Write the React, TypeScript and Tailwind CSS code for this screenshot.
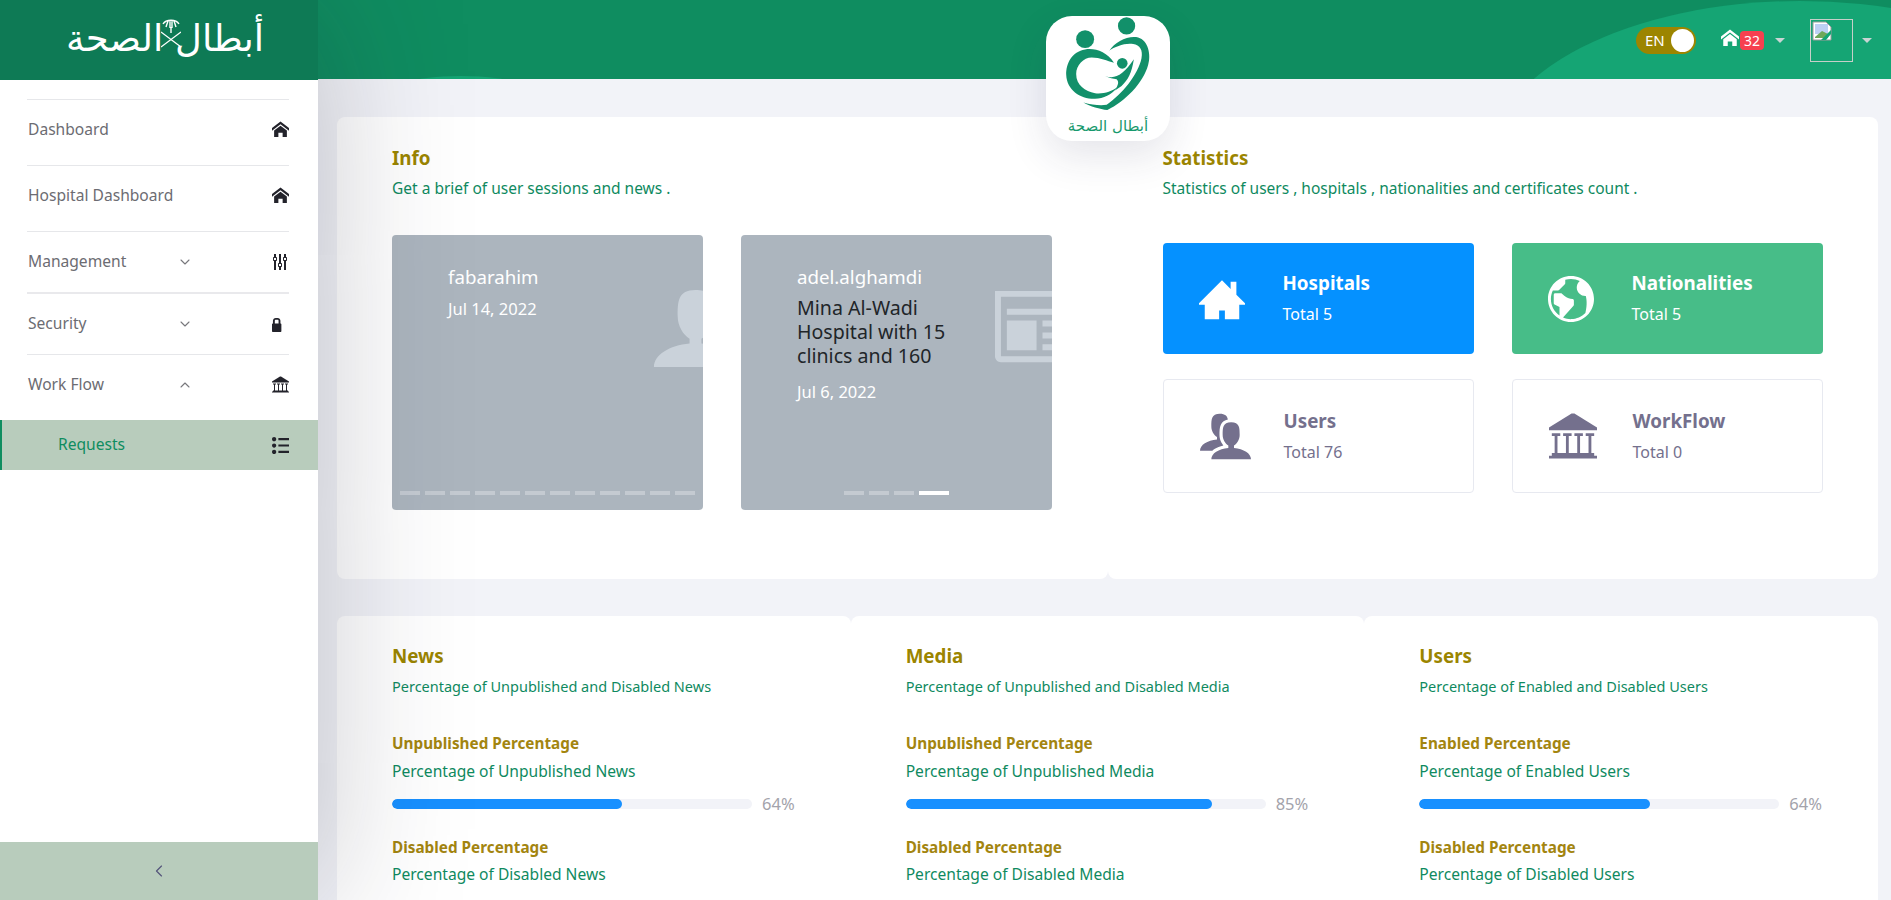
import React from "react";
import { ChevronDown, ChevronLeft, ChevronUp } from "lucide-react";
import {
  ImEarth,
  ImEqualizer2,
  ImHome,
  ImHome3,
  ImLibrary,
  ImList2,
  ImLock,
  ImNewspaper,
  ImUser,
  ImUsers,
  ImCancelCircle,
} from "react-icons/im";

const AR = { fontFamily: '"DejaVu Sans", sans-serif' };

function Caret() {
  return (
    <span className="w-0 h-0 border-l-[5px] border-r-[5px] border-t-[5px] border-l-transparent border-r-transparent border-t-[#c9d4d4]" />
  );
}

function BrandMark() {
  return (
    <svg viewBox="137 48 374 300" className="w-[124px] h-[100px] shrink-0" fill="#12906a">
      <circle cx="380" cy="77" r="26" />
      <circle cx="255" cy="117" r="27" />
      <circle cx="367" cy="190" r="16" />
      <path d="M342 188C320 155 285 143 255 148C215 155 197 190 198 225C200 270 240 298 285 297C310 296 335 285 352 262C335 275 310 283 285 280C255 275 228 255 228 222C228 195 250 172 275 172C300 172 322 182 342 188Z" />
      <path d="M328 152C345 125 385 105 415 112C445 120 455 165 445 195C430 250 375 305 322 331C300 328 270 320 250 308C275 315 300 318 320 315C365 285 415 225 425 175C430 150 420 135 400 132C375 128 345 140 328 152Z" />
      <path d="M315 228C345 240 370 225 402 178C395 220 385 240 365 258L345 272C355 255 358 245 350 238C340 236 328 234 315 228Z" />
    </svg>
  );
}

function Emblem() {
  return (
    <svg viewBox="0 0 20 44" className="absolute left-[161px] top-[17px] w-[20px] h-[44px]" stroke="#fff" fill="none" strokeWidth="1.4">
      <path d="M2 7C5 2 15 2 18 7M5 10L7 4M9 11V3M11 11V3M15 10L13 4M10 10V16" />
      <path d="M0 15L20 30M20 15L0 30" strokeWidth="1.2" />
    </svg>
  );
}

function MenuRow({
  label,
  icon,
  chevron,
  className,
}: {
  label: string;
  icon: React.ReactNode;
  chevron?: "up" | "down";
  className: string;
}) {
  return (
    <div className={`flex items-center ml-[27px] mr-[29px] pl-[1px] text-[15.6px] text-[#6c6c72] ${className}`}>
      <span className="flex-1">{label}</span>
      {chevron === "down" && <ChevronDown size={16} strokeWidth={1.6} className="mr-[79px] text-[#77777c]" />}
      {chevron === "up" && <ChevronUp size={16} strokeWidth={1.6} className="mr-[79px] text-[#77777c]" />}
      <span className="w-[17px] flex justify-start text-[#23232b]">{icon}</span>
    </div>
  );
}

function Sidebar() {
  return (
    <aside className="w-[318px] shrink-0 flex flex-col bg-white relative z-20 shadow-[0_0_150px_rgba(30,30,50,0.26)]">
      <div className="h-[80px] shrink-0 bg-[#0e7a55] relative flex items-center justify-center pl-[12px]">
        <span className="text-white text-[37px] leading-none pb-[4px]" style={AR}>
          أبطال الصحة
        </span>
        <Emblem />
      </div>
      <div className="flex-1 pt-[19px]">
        <MenuRow label="Dashboard" icon={<ImHome size={17} />} className="h-[66px] pb-[6px] border-t border-[#e6e7ea]" />
        <MenuRow label="Hospital Dashboard" icon={<ImHome size={17} />} className="h-[66px] pb-[6px] border-t border-[#e6e7ea]" />
        <MenuRow label="Management" chevron="down" icon={<ImEqualizer2 size={16} />} className="h-[61px] border-t border-[#e6e7ea]" />
        <MenuRow label="Security" chevron="down" icon={<ImLock size={15} />} className="h-[62px] border-t-2 border-[#e9e9ec]" />
        <MenuRow label="Work Flow" chevron="up" icon={<ImLibrary size={17} />} className="h-[66px] pb-[6px] border-t border-[#e6e7ea]" />
        <div className="h-[50px] bg-[#b8ccbc] border-l-2 border-[#0f8d60] flex items-center pl-[56px] pr-[29px] text-[15.6px] text-[#0f8d60]">
          <span className="flex-1">Requests</span>
          <ImList2 size={17} className="text-[#23232b]" />
        </div>
      </div>
      <div className="h-[58px] shrink-0 bg-[#b8ccbc] flex items-center justify-center">
        <ChevronLeft size={20} strokeWidth={1.4} className="text-[#54547a]" />
      </div>
    </aside>
  );
}

function BrokenImage() {
  return (
    <svg viewBox="0 0 20 20" className="w-[20px] h-[20px]">
      <path d="M1 1H14L19 6V19H1Z" fill="#fff" stroke="#9a9a9a" />
      <rect x="3" y="3" width="13" height="10" fill="#bcd0f3" />
      <path d="M3 16L10 10L16 13V17H3Z" fill="#6fa85a" />
      <path d="M9 19L19 9V13L14 19Z" fill="#15a574" />
    </svg>
  );
}

function Topbar() {
  return (
    <header className="h-[79px] shrink-0 bg-[#0f8d60] relative overflow-hidden flex items-start justify-end">
      <div className="absolute left-[1172px] top-[1px] w-[620px] h-[320px] rounded-[50%] bg-[#15a574]" />
      <div className="absolute left-[48px] top-[76px] w-[190px] h-[60px] rounded-[50%] bg-[#15a574]" />
      <div className="relative flex items-center mt-[19px] mr-[19px] h-[43px]">
        <div className="w-[60px] h-[27px] rounded-full bg-[#9c8500] flex items-center justify-between pl-[9px] pr-[2px]">
          <span className="text-white text-[15px]">EN</span>
          <span className="w-[23px] h-[23px] rounded-full bg-white" />
        </div>
        <ImHome size={18} className="text-white ml-[25px] -mt-[6px]" />
        <span className="ml-[1px] w-[24px] h-[19px] rounded bg-[#f6404f] text-white text-[14px] leading-[19px] text-center">32</span>
        <span className="ml-[11px] flex"><Caret /></span>
        <div className="ml-[25px] w-[43px] h-[43px] border border-[#c7cfc9] p-[1px]">
          <BrokenImage />
        </div>
        <span className="ml-[9px] flex"><Caret /></span>
      </div>
    </header>
  );
}

function CardHead({ title, sub, subSize }: { title: string; sub: string; subSize: string }) {
  return (
    <>
      <h3 className="text-[18.8px] leading-[24px] font-bold text-[#9b8500]">{title}</h3>
      <p className={`mt-[8px] leading-[20px] text-[#0f8a5f] ${subSize}`}>{sub}</p>
    </>
  );
}

function Dashes({ count, active, className }: { count: number; active?: number; className: string }) {
  return (
    <div className={`absolute top-[256px] flex gap-[5px] ${className}`}>
      {Array.from({ length: count }).map((_, i) => (
        <span
          key={i}
          className={i === active ? "w-[30px] h-[4px] bg-white" : "w-[20px] h-[4px] bg-[#c4cad1]"}
        />
      ))}
    </div>
  );
}

function InfoCard() {
  return (
    <div className="bg-white rounded-lg pt-[29px] px-[55px] h-[462px]">
      <CardHead title="Info" sub="Get a brief of user sessions and news ." subSize="text-[15.5px]" />
      <div className="mt-[37px] grid grid-cols-[311px_311px] gap-[38px]">
        <div className="relative h-[275px] rounded bg-[#acb5be] overflow-hidden pl-[56px] pt-[30px] text-white">
          <ImUser size={95} className="absolute left-[256px] top-[43px] text-[#cad2da]" />
          <div className="relative text-[18.7px] leading-[24px]">fabarahim</div>
          <div className="relative mt-[8px] text-[16.5px] leading-[24px]">Jul 14, 2022</div>
          <Dashes count={12} className="left-[8px]" />
        </div>
        <div className="relative h-[275px] rounded bg-[#acb5be] overflow-hidden pl-[56px] pt-[30px] text-white">
          <ImNewspaper size={95} className="absolute left-[254px] top-[44px] text-[#cad2da]" />
          <div className="relative text-[18.7px] leading-[24px]">adel.alghamdi</div>
          <div className="relative mt-[7px] text-[19.6px] leading-[24px] text-[#212529]">
            Mina Al-Wadi
            <br />
            Hospital with 15
            <br />
            clinics and 160
          </div>
          <div className="relative mt-[12px] text-[16.5px] leading-[24px]">Jul 6, 2022</div>
          <Dashes count={4} active={3} className="left-[103px]" />
        </div>
      </div>
    </div>
  );
}

function StatBox({
  title,
  total,
  icon,
  tone,
}: {
  title: string;
  total: string;
  icon: React.ReactNode;
  tone: string;
}) {
  return (
    <div className={`flex items-center rounded pl-[36px] ${tone}`}>
      <div className="w-[84px] shrink-0 flex">{icon}</div>
      <div>
        <div className="text-[18.8px] leading-[24px] font-bold">{title}</div>
        <div className="mt-[7px] text-[16px] leading-[24px]">{total}</div>
      </div>
    </div>
  );
}

function StatsCard() {
  return (
    <div className="bg-white rounded-lg pt-[29px] px-[55px] h-[462px]">
      <CardHead
        title="Statistics"
        sub="Statistics of users , hospitals , nationalities and certificates count ."
        subSize="text-[15.5px]"
      />
      <div className="mt-[45px] grid grid-cols-[311px_311px] grid-rows-[111px_114px] gap-x-[38px] gap-y-[25px]">
        <StatBox title="Hospitals" total="Total 5" icon={<ImHome3 size={46} />} tone="bg-[#0591ff] text-white" />
        <StatBox title="Nationalities" total="Total 5" icon={<ImEarth size={46} />} tone="bg-[#47bd88] text-white" />
        <StatBox title="Users" total="Total 76" icon={<ImUsers size={51} />} tone="bg-white border border-[#e7e9f0] text-[#74708d]" />
        <StatBox title="WorkFlow" total="Total 0" icon={<ImLibrary size={48} />} tone="bg-white border border-[#e7e9f0] text-[#74708d]" />
      </div>
    </div>
  );
}

function Progress({ value }: { value: number }) {
  return (
    <div className="flex items-center mt-[18px]">
      <div className="w-[360px] h-[10px] rounded-full bg-[#f2f3f8] overflow-hidden">
        <div className="h-full rounded-full bg-[#1890ff]" style={{ width: `${value}%` }} />
      </div>
      <span className="ml-[10px] text-[16.5px] leading-[10px] text-[#a3a3ab]">{value}%</span>
    </div>
  );
}

function PercentCard({
  title,
  sub,
  first,
  firstSub,
  value,
  secondSub,
}: {
  title: string;
  sub: string;
  first: string;
  firstSub: string;
  value: number;
  secondSub: string;
}) {
  return (
    <div className="bg-white rounded-lg pt-[28px] px-[55px] h-[320px]">
      <CardHead title={title} sub={sub} subSize="text-[14.5px]" />
      <h4 className="mt-[37px] text-[15.3px] leading-[20px] font-bold text-[#a38510]">{first}</h4>
      <p className="mt-[8px] text-[15.6px] leading-[20px] text-[#0f8a5f]">{firstSub}</p>
      <Progress value={value} />
      <h4 className="mt-[28px] text-[15.3px] leading-[20px] font-bold text-[#a38510]">Disabled Percentage</h4>
      <p className="mt-[7px] text-[15.6px] leading-[20px] text-[#0f8a5f]">{secondSub}</p>
      <div className="flex items-center mt-[16px]">
        <div className="w-[360px] h-[10px] rounded-full bg-[#f2f3f8]" />
        <ImCancelCircle size={14} className="ml-[10px] text-[#f5222d]" />
      </div>
    </div>
  );
}

export default function App() {
  return (
    <div
      className="relative flex h-[900px] w-full overflow-hidden bg-[#f2f3f8]"
      style={{ fontFamily: '"Noto Sans", sans-serif' }}
    >
      <Sidebar />
      <main className="flex-1 min-w-0 flex flex-col">
        <Topbar />
        <div className="pt-[38px] pl-[19px] pr-[13px]">
          <div className="grid grid-cols-2">
            <InfoCard />
            <StatsCard />
          </div>
          <div className="grid grid-cols-3 mt-[37px]">
            <PercentCard
              title="News"
              sub="Percentage of Unpublished and Disabled News"
              first="Unpublished Percentage"
              firstSub="Percentage of Unpublished News"
              value={64}
              secondSub="Percentage of Disabled News"
            />
            <PercentCard
              title="Media"
              sub="Percentage of Unpublished and Disabled Media"
              first="Unpublished Percentage"
              firstSub="Percentage of Unpublished Media"
              value={85}
              secondSub="Percentage of Disabled Media"
            />
            <PercentCard
              title="Users"
              sub="Percentage of Enabled and Disabled Users"
              first="Enabled Percentage"
              firstSub="Percentage of Enabled Users"
              value={64}
              secondSub="Percentage of Disabled Users"
            />
          </div>
        </div>
      </main>
      <div className="absolute left-[1046px] top-[16px] z-30 w-[124px] h-[125px] rounded-[26px] bg-white shadow-[0_15px_40px_rgba(40,40,80,0.12)] flex flex-col items-center">
        <BrandMark />
        <span className="text-[15px] leading-[20px] text-[#17996d]" style={AR}>
          أبطال الصحة
        </span>
      </div>
    </div>
  );
}
